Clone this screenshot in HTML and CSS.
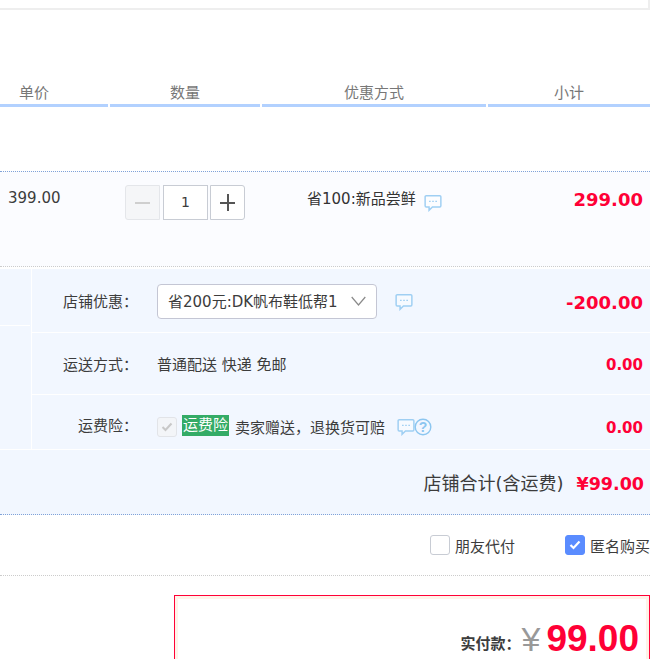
FILE: index.html
```html
<!DOCTYPE html>
<html lang="zh-CN">
<head>
<meta charset="utf-8">
<title>确认订单</title>
<link rel="stylesheet" href="styles.css">
</head>
<body>
<svg class="defs" width="0" height="0" aria-hidden="true">
  <symbol id="bubble" viewBox="0 0 16 16">
    <path d="M2 1.5h12a1 1 0 0 1 1 1v8a1 1 0 0 1-1 1H7.5L4.5 14.5v-3H2a1 1 0 0 1-1-1v-8a1 1 0 0 1 1-1z" fill="#fff" fill-opacity=".35" stroke="#9fcff3" stroke-width="1.3"/>
    <path d="M4.5 6.5h1.4M7.3 6.5h1.4M10.100 6.500h1.400" stroke="#9fcff3" stroke-width="1.200"/>
  </symbol>
</svg>
<main class="page">
  <div class="top-box"></div>
  <div class="table-head">
    <div class="hc hc-price">单价</div>
    <div class="hc">数量</div>
    <div class="hc">优惠方式</div>
    <div class="hc">小计</div>
  </div>
  <section class="item">
    <div class="item-price">399.00</div>
    <div class="stepper">
      <button class="step step-minus" type="button"><span class="bar-h"></span></button>
      <div class="qty">1</div>
      <button class="step step-plus" type="button"><span class="bar-h"></span><span class="bar-v"></span></button>
    </div>
    <div class="promo">省100:新品尝鲜<svg class="bubble bubble-item"><use href="#bubble"/></svg></div>
    <div class="amount amount-item">299.00</div>
  </section>
  <section class="shop">
    <div class="shop-side"><div class="side-a"></div><div class="side-b"></div></div>
    <div class="shop-rows">
      <div class="srow srow-1">
        <div class="slabel">店铺优惠：</div>
        <div class="select"><span>省200元:DK帆布鞋低帮1</span><svg class="chev" width="15" height="10" viewBox="0 0 15 10"><path d="M.7 1 7.500 9 14.300 1" fill="none" stroke="#8a8a8a" stroke-width="1.200"/></svg></div>
        <svg class="bubble bubble-shop"><use href="#bubble"/></svg>
        <div class="amount amount-big">-200.00</div>
      </div>
      <div class="srow srow-2">
        <div class="slabel slabel-ship">运送方式：</div>
        <div class="stext">普通配送 快递 免邮</div>
        <div class="amount amount-ship">0.00</div>
      </div>
      <div class="srow srow-3">
        <div class="slabel">运费险：</div>
        <div class="fake-check"><svg width="12" height="10" viewBox="0 0 12 10"><path d="M1.500 5 4.500 8 10.500 1.500" fill="none" stroke="#c8c8c8" stroke-width="2"/></svg></div>
        <span class="ins-tag">运费险</span>
        <span class="ins-text">卖家赠送，退换货可赔</span>
        <svg class="bubble bubble-ins"><use href="#bubble"/></svg>
        <svg class="help" width="18" height="18" viewBox="0 0 18 18"><circle cx="9" cy="9" r="7.800" fill="none" stroke="#8cc6f0" stroke-width="1.400"/><text x="9" y="13.500" text-anchor="middle" class="help-q">?</text></svg>
        <div class="amount amount-ins">0.00</div>
      </div>
    </div>
  </section>
  <section class="shop-total">
    <span class="total-label">店铺合计(含运费)</span>
    <span class="total-val">¥99.00</span>
  </section>
  <section class="options">
    <label class="opt"><span class="box"></span>朋友代付</label>
    <label class="opt opt-last"><span class="box box-on"><svg width="12" height="10" viewBox="0 0 12 10"><path d="M1.500 5 4.500 8 10.500 1.500" fill="none" stroke="#fff" stroke-width="2.200"/></svg></span>匿名购买</label>
  </section>
  <section class="pay">
    <div class="pay-inner">
      <span class="pay-label">实付款：</span><span class="pay-yen">¥</span><span class="pay-val">99.00</span>
    </div>
  </section>
</main>
</body>
</html>
```
FILE: styles.css
```css
* { box-sizing: border-box; }
html, body { margin: 0; padding: 0; background: #fff; }
body { font-family: "DejaVu Sans", "Noto Sans CJK SC", sans-serif; font-size: 15px; color: #3c3c3c; overflow: hidden; height: 659px; }
.defs { position: absolute; }
.page { width: 650px; overflow: hidden; }

.top-box { height: 10px; border-bottom: 2px solid #eee; border-right: 2px solid #eee; }

.table-head { display: grid; grid-template-columns: 108px 150px 224px 162px; column-gap: 2px; margin-top: 72px; }
.hc { height: 25px; border-bottom: 3px solid #b2d1ff; text-align: center; color: #777; line-height: 22px; }
.hc-price { padding-right: 40px; }

.item { margin-top: 64px; height: 96px; background: #fbfcff; border-top: 1px dotted #80a2d8; border-bottom: 1px dotted #ccc; display: flex; align-items: flex-start; }
.item-price { width: 125px; padding: 16px 0 0 8px; line-height: 20px; }
.stepper { display: flex; gap: 2px; margin-top: 13px; width: 130px; }
.step { width: 35px; height: 35px; padding: 0; border: 1px solid #c8ccd4; background: #fff; position: relative; }
.step-minus { border-radius: 3px 0 0 3px; background: #f5f6f8; border-color: #e4e6ea; }
.step-plus { border-radius: 0 3px 3px 0; }
.bar-h { position: absolute; left: 9px; right: 9px; top: 16px; height: 2px; background: #555; }
.step-minus .bar-h { background: #cfcfcf; }
.bar-v { position: absolute; top: 8px; bottom: 8px; left: 16px; width: 2px; background: #555; }
.qty { width: 45px; height: 35px; margin-left: 1px; border: 1px solid #c8ccd4; background: #fff; text-align: center; line-height: 33px; font-size: 14px; }
.promo { margin-left: 52px; margin-top: 15px; line-height: 24px; display: flex; align-items: flex-start; color: #333; }
.bubble { width: 18px; height: 18px; display: block; flex: none; }
.bubble-item { margin: 7px 0 0 8px; }
.amount { margin-left: auto; padding-right: 7px; color: #ff0036; font-weight: bold; font-size: 15px; }
.amount-item { font-size: 18px; padding-top: 16px; line-height: 24px; }

.shop { display: flex; background: #f2f7ff; height: 181px; margin-top: 2px; border-bottom: 1px solid #fff; }
.shop-side { width: 32px; border-right: 1px solid #fff; flex: none; }
.side-a { height: 57px; border-bottom: 1px solid #fff; margin-right: 1px; }
.shop-rows { flex: 1; min-width: 0; }
.srow { display: flex; align-items: center; }
.srow-1 { height: 64px; padding-top: 2px; border-bottom: 1px solid #fff; }
.srow-2 { height: 62px; border-bottom: 1px solid #fff; }
.srow-3 { height: 54px; padding-top: 6px; }
.slabel { width: 125px; padding-right: 19px; padding-bottom: 2px; text-align: right; white-space: nowrap; flex: none; }
.slabel-ship { padding-bottom: 1px; }
.select { width: 220px; height: 35px; background: #fff; border: 1px solid #c4c6d4; border-radius: 4px; display: flex; align-items: center; justify-content: space-between; padding: 0 10px 2px 10px; flex: none; white-space: nowrap; }
.bubble-shop { margin-left: 18px; }
.stext { white-space: nowrap; padding-bottom: 1px; }
.amount-big { font-size: 18px; margin-top: 1px; }
.amount-ship { margin-top: 2px; }
.fake-check { width: 20px; height: 20px; margin-top: 4px; border: 1px solid #e2e4e8; border-radius: 3px; background: #f3f5f8; display: flex; align-items: center; justify-content: center; flex: none; }
.ins-tag { margin-left: 5px; background: #34ab66; color: #fff; height: 21px; line-height: 20px; padding: 0 1px; margin-top: 1px; white-space: nowrap; }
.ins-text { margin-left: 6px; margin-top: 2px; white-space: nowrap; }
.bubble-ins { margin-left: 12px; margin-top: 3px; }
.help { margin-left: -1px; margin-top: 3px; display: block; }
.help-q { font-size: 14px; font-weight: bold; fill: #8cc6f0; font-family: "Liberation Sans", sans-serif; }
.amount-ins { margin-top: 5px; }

.shop-total { height: 65px; background: #f2f7ff; border-bottom: 1px dotted #80a2d8; display: flex; justify-content: flex-end; align-items: center; padding-right: 6px; gap: 13px; }
.total-label { font-size: 18px; color: #3c3c3c; }
.total-val { font-size: 17.5px; font-weight: bold; color: #ff0036; margin-top: 3px; }

.options { height: 61px; border-bottom: 1px dotted #ccc; display: flex; justify-content: flex-end; align-items: center; white-space: nowrap; }
.opt { display: flex; align-items: center; gap: 5px; color: #3c3c3c; }
.opt-last { margin-left: 50px; }
.box { width: 20px; height: 20px; border: 1px solid #c8ccd4; border-radius: 3px; background: #fff; display: flex; align-items: center; justify-content: center; }
.box-on { background: #5a8cff; border-color: #5a8cff; }

.pay { margin: 19px 0 0 174px; height: 80px; border: 1px solid #ff0036; border-bottom: 0; background: #fff; }
.pay-inner { border: 3px solid #fff2e8; border-bottom: 0; height: 79px; display: flex; justify-content: flex-end; align-items: baseline; padding: 18px 7px 0 0; }
.pay-label { align-self: flex-start; margin-top: 17px; line-height: 20px; font-size: 15px; font-weight: bold; color: #3c3c3c; }
.pay-yen { font-family: "Liberation Sans", sans-serif; font-size: 34px; color: #999; margin: 0 6px 0 1px; line-height: 44px; }
.pay-val { font-family: "Liberation Sans", sans-serif; font-size: 37px; font-weight: bold; color: #ff0036; line-height: 44px; }
```
